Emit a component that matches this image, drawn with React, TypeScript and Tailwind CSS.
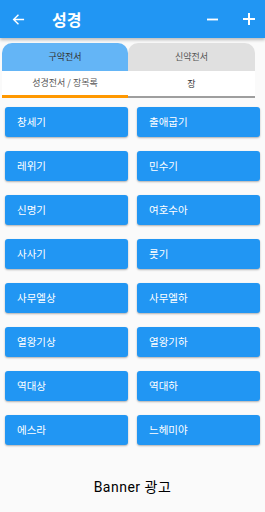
import React from "react";

const books: [string, string][] = [
  ["창세기", "출애굽기"],
  ["레위기", "민수기"],
  ["신명기", "여호수아"],
  ["사사기", "룻기"],
  ["사무엘상", "사무엘하"],
  ["열왕기상", "열왕기하"],
  ["역대상", "역대하"],
  ["에스라", "느헤미야"],
];

const font = { fontFamily: '"Noto Sans CJK KR", Roboto, sans-serif' };

export default function App() {
  return (
    <div className="w-[265px] h-[512px] bg-[#fafafa] flex flex-col overflow-hidden" style={font}>
      <div className="h-[38px] bg-[#2196f3] flex items-center text-white shadow-[0_2px_3px_rgba(0,0,0,0.25)] relative z-10 shrink-0">
        <svg className="ml-[12px]" width="13" height="13" viewBox="0 0 24 24" fill="none" stroke="white" strokeWidth="2.6" strokeLinecap="square">
          <path d="M21 12H4M11 4l-8 8 8 8" />
        </svg>
        <div className="ml-[27px] text-[16px] font-bold leading-none">성경</div>
        <div className="flex-1" />
        <svg width="11" height="11" viewBox="0 0 12 12" className="mr-[25px]">
          <rect x="0" y="5" width="12" height="2" fill="white" />
        </svg>
        <svg width="12" height="12" viewBox="0 0 12 12" className="mr-[10px]">
          <rect x="0" y="5" width="12" height="2" fill="white" />
          <rect x="5" y="0" width="2" height="12" fill="white" />
        </svg>
      </div>

      <div className="pt-[5px] pl-[2px] w-[255px] shrink-0">
        <div className="flex">
          <div className="w-[126px] h-[28px] bg-[#64b5f6] rounded-t-[10px] flex items-center justify-center text-[9px] text-[#333]">구약전서</div>
          <div className="w-[127px] h-[28px] bg-[#e0e0e0] rounded-t-[10px] flex items-center justify-center text-[9px] text-[#555]">신약전서</div>
        </div>
        <div className="flex bg-white">
          <div className="w-[126px] h-[27px] border-b-[3px] border-[#ff9800] flex items-center justify-center text-[9px] text-[#555]">성경전서 / 장목록</div>
          <div className="w-[127px] h-[27px] border-b-[2px] border-[#9e9e9e] flex items-center justify-center text-[9px] text-[#333]">장</div>
        </div>
      </div>

      <div className="grid grid-cols-2 gap-x-[9px] gap-y-[14px] pl-[5px] pr-[5px] pt-[9px]">
        {books.flat().map((b) => (
          <div key={b} className="h-[30px] bg-[#2196f3] rounded-[3px] shadow-[0_1px_2px_rgba(0,0,0,0.3)] flex items-center pl-[12px] text-white text-[10.5px] font-normal">
            {b}
          </div>
        ))}
      </div>

      <div className="flex-1 flex items-center justify-center pt-[18px]">
        <span className="text-[14px] text-black" style={{ fontFamily: 'Roboto, "Noto Sans CJK KR", sans-serif', letterSpacing: "0.5px" }}>Banner 광고</span>
      </div>
    </div>
  );
}
